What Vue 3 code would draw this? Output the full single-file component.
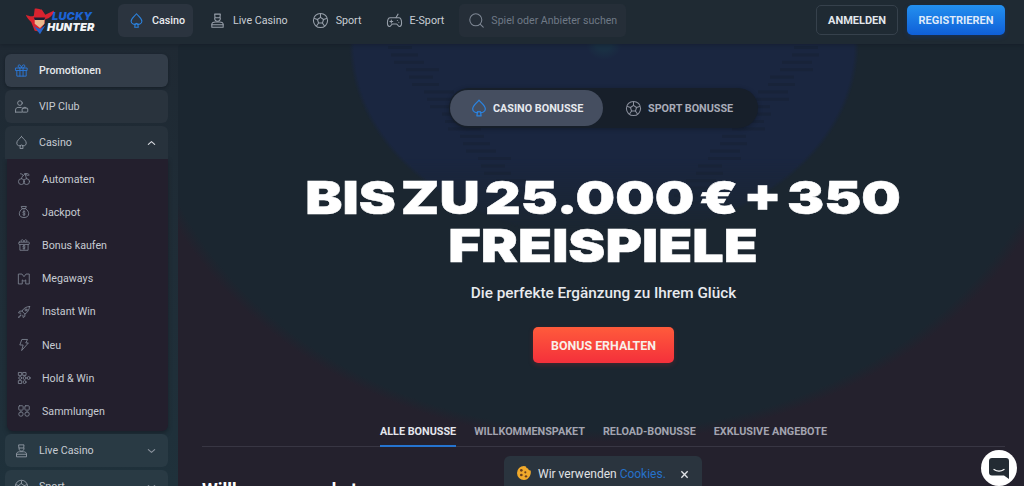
<script setup>
const topNav = [
  { label: 'Casino', icon: 'spade', active: true },
  { label: 'Live Casino', icon: 'dealer' },
  { label: 'Sport', icon: 'ball' },
  { label: 'E-Sport', icon: 'pad' },
]
const subNav = [
  { label: 'Automaten', icon: 'cherry' },
  { label: 'Jackpot', icon: 'bag' },
  { label: 'Bonus kaufen', icon: 'giftd' },
  { label: 'Megaways', icon: 'mega' },
  { label: 'Instant Win', icon: 'rocket' },
  { label: 'Neu', icon: 'bolt' },
  { label: 'Hold & Win', icon: 'hold' },
  { label: 'Sammlungen', icon: 'grid' },
]
const tabs = ['ALLE BONUSSE', 'WILLKOMMENSPAKET', 'RELOAD-BONUSSE', 'EXKLUSIVE ANGEBOTE']
const rows = []
for (let i = 0; i < 22; i++) {
  const y = 2 + i * 7.4
  const half = 216 - i * 6
  rows.push({ y, lx: 426 - half - (i % 3) * 3, rx: 426 + half - 26 + (i % 2) * 4, w: 24 + (i % 4) * 3 })
}
</script>

<template>
  <div class="page">
    <svg class="sprite" aria-hidden="true">
      <symbol id="i-spade" viewBox="0 0 24 24"><path d="M12 2.500c3 3.800 7.600 6.400 7.600 10.600a4.400 4.400 0 0 1-7.600 2.900 4.400 4.400 0 0 1-7.600-2.900C4.400 8.900 9 6.300 12 2.500z"/><path d="M10.200 16.500 9.500 21.500h5l-.7-5"/></symbol>
      <symbol id="i-dealer" viewBox="0 0 24 24"><path d="M8 3h8l-.5 5h-7z"/><path d="M8 8.500c0 3 1.500 4.500 4 4.500s4-1.500 4-4.500"/><path d="M4 21.500v-4c0-2 2-3.500 5-3.500h6c3 0 5 1.500 5 3.500v4z"/><path d="M4 18h16"/></symbol>
      <symbol id="i-ball" viewBox="0 0 24 24"><circle cx="12" cy="12" r="10"/><path d="M12 7.500l4.300 3.100-1.600 5h-5.400l-1.600-5z"/><path d="M12 7.500V3M16.300 10.600l4.200-1.500M14.700 15.600l2.700 3.800M9.300 15.600l-2.700 3.800M7.700 10.600 3.500 9.100"/></symbol>
      <symbol id="i-pad" viewBox="0 0 24 24"><path d="M6 8h12c2.500 0 4 3 4 7.500 0 3-1 5-2.800 5-2.200 0-2.700-3.500-4.700-3.500h-5c-2 0-2.500 3.500-4.700 3.500C3 20.500 2 18.500 2 15.500 2 11 3.500 8 6 8z"/><path d="M7.500 11.500v4M5.500 13.500h4M16 12h.1M18 14.500h.1M14 8l3-5"/></symbol>
      <symbol id="i-search" viewBox="0 0 24 24"><circle cx="11" cy="11" r="8.500"/><path d="m17.500 17.500 4 4"/></symbol>
      <symbol id="i-gift" viewBox="0 0 24 24"><rect x="3" y="8" width="18" height="4"/><path d="M4.500 12v9h15v-9M9.500 8v13M14.500 8v13M9.500 8C6 8 5.500 3 8.500 3c2 0 3.500 3 3.500 5 0-2 1.500-5 3.500-5 3 0 2.500 5-1 5"/></symbol>
      <symbol id="i-vip" viewBox="0 0 24 24"><circle cx="9.500" cy="6.500" r="3.700"/><path d="M2.500 21v-3.500c0-2.500 2-4 4-4h5"/><rect x="13" y="14.500" width="9" height="6.500" rx="1.500"/><path d="M2.500 21H13M15.500 14.500c0-2 4-2 4 0"/></symbol>
      <symbol id="i-cherry" viewBox="0 0 24 24"><circle cx="7.500" cy="16.500" r="5"/><circle cx="16.500" cy="16.500" r="5"/><path d="M7.500 11.500C8 8 11 5 14 3c.5 3 1.500 6 2.500 8.500M14 3c2-1 5-.5 7 2-2 1.500-5 1-7-2zM6 3c2 0 4 1 5 3"/></symbol>
      <symbol id="i-bag" viewBox="0 0 24 24"><path d="M8 2.500h8l-1.500 4h-5z"/><path d="M9 6.500C5.500 9 4 12 4 15c0 4 3 6.500 8 6.500s8-2.500 8-6.500c0-3-1.500-6-5-8.500z"/><path d="M14 11.500c-1-1-4-1-4 1 0 2 4 1 4 3 0 2-3 2-4 1M12 9.500v9"/></symbol>
      <symbol id="i-giftd" viewBox="0 0 24 24"><rect x="3" y="7" width="18" height="4" rx="1"/><path d="M5 11v10h14V11M8 7C6 5.500 7 3 9 3c1.500 0 3 2 3 4 0-2 1.500-4 3-4 2 0 3 2.500 1 4"/><path d="M14 13.500c-1-.8-4-.8-4 .8 0 1.800 4 .8 4 2.700 0 1.600-3 1.600-4 .8M12 12.500v7"/></symbol>
      <symbol id="i-mega" viewBox="0 0 24 24"><path d="M3 3.500h5.500L12 8l3.500-4.500H21v17h-6v-7L12 16l-3-2.500v7H3z"/></symbol>
      <symbol id="i-rocket" viewBox="0 0 24 24"><path d="M21.500 2.500c-6 .5-10 3-13 8l5 5c5-3 7.500-7 8-13z"/><circle cx="15.500" cy="8.500" r="1.800"/><path d="M8.500 10.500H4.500l-2 3 4 .5M13.500 15.500v4l-3 2-.5-4M6.500 17.500c-2 .5-3.500 2-4 4 2-.5 3.500-2 4-4z"/></symbol>
      <symbol id="i-bolt" viewBox="0 0 24 24"><path d="M9 2.500h9l-3 6h4.500L8 21.500l2.500-9.500H5.500z"/></symbol>
      <symbol id="i-hold" viewBox="0 0 24 24"><rect x="3" y="2.500" width="5" height="5"/><rect x="10.500" y="2.500" width="5" height="5"/><circle cx="5.500" cy="12" r="2.500"/><circle cx="13" cy="12" r="2.500"/><circle cx="20" cy="12" r="2.500"/><rect x="3" y="16.500" width="5" height="5"/><circle cx="13" cy="19" r="2.500"/></symbol>
      <symbol id="i-grid" viewBox="0 0 24 24"><rect x="3" y="3" width="7.500" height="7.500" rx="1.500"/><rect x="13.500" y="3" width="7.500" height="7.500" rx="1.500"/><rect x="3" y="13.500" width="7.500" height="7.500" rx="3.700"/><rect x="13.500" y="13.500" width="7.500" height="7.500" rx="3.700"/></symbol>
    </svg>

    <header class="top">
      <div class="logo">
        <svg class="logo-mark" viewBox="0 0 34 32">
          <path d="M1 9c4 2 7 2 9 1l1-8c3-1 6 1 8 1l4 6 10-5c-1 5-5 9-10 10l-1 5-6 9-5-1-4-10C4 15 2 12 1 9z" fill="#d8232f"/>
          <path d="M11 13h11v6l-5 5-6-5z" fill="#e8b98d"/>
          <path d="M10 12h13l-1 3H11z" fill="#1c1f33"/>
          <path d="M10 22l7 3 6-4-6 10z" fill="#2563c9"/>
        </svg>
        <div class="logo-text"><span class="lucky">LUCKY</span><span class="hunter">HUNTER</span></div>
      </div>
      <nav class="nav">
        <a v-for="n in topNav" :key="n.label" class="nav-item" :class="{ on: n.active }">
          <svg class="ico nav-ico"><use :href="'#i-' + n.icon" /></svg>
          <span>{{ n.label }}</span>
        </a>
      </nav>
      <div class="search">
        <svg class="ico search-ico"><use href="#i-search" /></svg>
        <span>Spiel oder Anbieter suchen</span>
      </div>
      <div class="actions">
        <button class="btn login">ANMELDEN</button>
        <button class="btn reg">REGISTRIEREN</button>
      </div>
    </header>

    <div class="body">
      <aside class="side">
        <a class="s-item active"><svg class="ico s-ico blue"><use href="#i-gift" /></svg>Promotionen</a>
        <a class="s-item"><svg class="ico s-ico"><use href="#i-vip" /></svg>VIP Club</a>
        <div class="group">
          <a class="s-item open"><svg class="ico s-ico"><use href="#i-spade" /></svg>Casino
            <svg class="chev up" viewBox="0 0 10 6"><path d="M1.500 4.500 5 1.500l3.500 3" /></svg>
          </a>
          <div class="sub">
            <a v-for="s in subNav" :key="s.label" class="sub-item">
              <svg class="ico sub-ico"><use :href="'#i-' + s.icon" /></svg>{{ s.label }}
            </a>
          </div>
        </div>
        <a class="s-item teal"><svg class="ico s-ico"><use href="#i-dealer" /></svg>Live Casino
          <svg class="chev" viewBox="0 0 10 6"><path d="M1.500 1.500 5 4.500l3.500-3" /></svg>
        </a>
        <a class="s-item teal"><svg class="ico s-ico"><use href="#i-ball" /></svg>Sport
          <svg class="chev" viewBox="0 0 10 6"><path d="M1.500 1.500 5 4.500l3.500-3" /></svg>
        </a>
      </aside>

      <main class="main">
        <div class="glow">
          <svg class="stripes" width="846" height="200">
            <g fill="#16202f">
              <template v-for="r in rows" :key="r.y">
                <rect :x="r.lx" :y="r.y" :width="r.w" height="3" />
                <rect :x="r.rx" :y="r.y" :width="r.w" height="3" />
              </template>
            </g>
          </svg>
        </div>
        <section class="hero">
          <div class="switch">
            <a class="sw on"><svg class="ico sw-ico bluei"><use href="#i-spade" /></svg>CASINO BONUSSE</a>
            <a class="sw"><svg class="ico sw-ico"><use href="#i-ball" /></svg>SPORT BONUSSE</a>
          </div>
          <h1 class="title"><span>BIS ZU 25.000 € + 350</span><span>FREISPIELE</span></h1>
          <p class="lead">Die perfekte Ergänzung zu Ihrem Glück</p>
          <button class="cta">BONUS ERHALTEN</button>
        </section>
        <div class="tabs">
          <a v-for="(t, i) in tabs" :key="t" class="tab" :class="{ on: i === 0 }">{{ t }}</a>
        </div>
        <h2 class="welcome">Willkommenspaket</h2>
      </main>
    </div>

    <div class="toast">
      <svg class="cookie" viewBox="0 0 24 24">
        <path d="M12 1.500c1 0 2 .3 3 .8.200 2 1.500 3 3 3 .5 2 2 3 4 2.800 1.500 6-3 14.400-10 14.400A10.500 10.500 0 0 1 12 1.500z" fill="#f0a92b"/>
        <circle cx="8" cy="8" r="2" fill="#6b3f1d"/><circle cx="14" cy="11" r="1.600" fill="#6b3f1d"/>
        <circle cx="8" cy="15" r="2" fill="#6b3f1d"/><circle cx="15" cy="17" r="1.800" fill="#6b3f1d"/>
      </svg>
      <span class="t-text">Wir verwenden <a>Cookies.</a></span>
      <svg class="close" viewBox="0 0 10 10"><path d="M1.500 1.500l7 7M8.500 1.500l-7 7" /></svg>
    </div>
    <div class="chat">
      <svg viewBox="0 0 24 24" width="24" height="24">
        <path d="M5 2h14a3 3 0 0 1 3 3v18l-5-3.500H5a3 3 0 0 1-3-3V5a3 3 0 0 1 3-3z" fill="#232b33"/>
        <path d="M7 13.500c3 2 7 2 10 0" stroke="#fff" stroke-width="1.300" fill="none" stroke-linecap="round"/>
      </svg>
    </div>
  </div>
</template>

<style>
html, body { margin: 0; background: #24212d; overflow: hidden; }
</style>

<style scoped>
* { box-sizing: border-box; }
.page {
  width: 1024px; height: 486px; overflow: hidden; position: relative;
  font-family: Roboto, "Liberation Sans", sans-serif; color: #d5d8de;
  background: #1f2a33;
}
.sprite { display: none; }
.ico { fill: none; stroke: currentColor; stroke-width: 1.500; stroke-linecap: round; stroke-linejoin: round; flex: none; }

.top { height: 44px; display: flex; align-items: flex-start; padding-top: 4px; background: #1f2a33; position: relative; z-index: 2; box-shadow: 0 1px 4px rgba(15, 22, 30, .45); }
.logo { width: 118px; height: 33px; padding-left: 25px; display: flex; align-items: center; flex: none; }
.logo-mark { width: 30px; height: 30px; flex: none; margin-right: -8px; }
.logo-text { position: relative; display: flex; flex-direction: column; font-family: Inter, sans-serif; font-weight: 900; font-style: italic; font-size: 11px; line-height: 11px; letter-spacing: .2px; margin-top: 3px; }
.lucky { color: #1c62d4; padding-left: 5px; display: block; }
.hunter { color: #f2f4f7; display: block; }

.nav { display: flex; flex: none; }
.nav-item { display: flex; align-items: center; height: 33px; font-size: 10.700px; font-weight: 400; color: #c9ced5; padding: 0 8px 0 16px; gap: 7px; border-radius: 6px; white-space: nowrap; }
.nav-item.on { width: 75px; background: #2b343f; color: #e9ebef; font-weight: 500; padding: 0 0 0 10px; }
.nav-item.on .ico { color: #2b83e0; }
.nav-ico { width: 17px; height: 17px; color: #98a0ab; }

.search { width: 167px; height: 33px; margin-left: 7px; background: #252e38; border-radius: 5px; display: flex; align-items: center; padding-left: 9px; gap: 6px; font-size: 10.600px; color: #6f7986; white-space: nowrap; flex: none; }
.search-ico { width: 17px; height: 17px; color: #7d8693; }

.actions { margin-left: auto; padding-right: 19px; display: flex; gap: 9px; padding-top: 1px; }
.btn { height: 30px; border-radius: 5px; font-family: Roboto, sans-serif; font-weight: 700; font-size: 11px; color: #e3e7ec; padding: 0; }
.login { width: 82px; background: transparent; border: 1px solid #36414c; }
.reg { width: 98px; border: 0; background: linear-gradient(#2390ef, #0f5fd8); color: #dfeafa; box-shadow: 0 2px 4px rgba(10, 60, 150, .35); }

.body { display: flex; height: 442px; background: linear-gradient(#1f2933, #1f313b); }
.side { width: 178px; flex: none; padding: 10px 10px 0 5px; display: flex; flex-direction: column; gap: 3px; }
.s-item { height: 33px; flex: none; display: flex; align-items: center; padding-left: 9px; gap: 10px; font-size: 10.700px; color: #c6cbd2; background: #29333d; border-radius: 6px; position: relative; }
.s-item.active { background: #333d49; color: #e6e9ed; font-weight: 500; box-shadow: 0 1px 3px rgba(10, 15, 22, .4); }
.s-item.teal { background: #293a44; }
.s-item.open { background: #27323c; border-radius: 6px 6px 0 0; }
.s-ico { width: 15px; height: 15px; color: #8e96a1; }
.s-ico.blue { color: #2b78d8; }
.chev { width: 9px; height: 6px; margin-left: auto; margin-right: 12px; fill: none; stroke: #8a929d; stroke-width: 1.300; stroke-linecap: round; stroke-linejoin: round; }
.chev.up { stroke: #d5d8de; }
.group { display: flex; flex-direction: column; }
.sub { background: #231f2d; border-radius: 0 0 6px 6px; margin-left: 2px; height: 272px; padding-top: 3.500px; display: flex; flex-direction: column; box-shadow: 0 2px 4px rgba(15, 18, 25, .5); }
.sub-item { height: 33.200px; flex: none; display: flex; align-items: center; padding-left: 10px; gap: 11px; font-size: 10.700px; color: #c6cbd2; }
.sub-ico { width: 14px; height: 14px; color: #7d8491; }

.main { flex: 1; min-width: 0; position: relative; overflow: hidden; padding: 0 19px 0 24px;
  background: radial-gradient(475px 382px at 426px 16px, #1b2630 97%, #24212d 100%);
  border-top-left-radius: 4px;
  display: flex; flex-direction: column; }
.glow { position: absolute; left: 0; top: 0; width: 846px; height: 190px;
  background:
    radial-gradient(18px 16px at 426px 0, #1a3044 40%, transparent 100%),
    radial-gradient(255px 195px at 426px 0, #1a2640 98%, transparent 100%);
  -webkit-mask-image: linear-gradient(#000 60%, transparent);
  mask-image: linear-gradient(#000 60%, transparent); }
.stripes { position: absolute; left: 0; top: 0; opacity: .4; }

.hero { position: relative; display: flex; flex-direction: column; align-items: center; padding-top: 44px; height: 366px; flex: none; }
.switch { width: 309px; height: 40px; flex: none; background: #171f2a; border-radius: 20px; display: flex; align-items: center; padding-left: 1px; font-size: 10.800px; font-weight: 700; color: #a9acb8; box-shadow: 0 1px 4px rgba(10, 14, 20, .4); }
.sw { display: flex; align-items: center; height: 36px; border-radius: 18px; gap: 6px; padding-left: 22px; white-space: nowrap; }
.sw.on { width: 153px; background: #454e60; color: #e6e9ee; padding-left: 19px; gap: 4px; }
.sw-ico { width: 17px; height: 17px; color: #8a8f9c; }
.sw-ico.bluei { width: 20px; height: 20px; color: #2b83e0; }

.title { margin: 45px 0 0; display: flex; flex-direction: column; align-items: center; font-family: Inter, sans-serif; font-weight: 900; font-size: 46px; line-height: 48px; color: #fff; white-space: nowrap; transform: scaleX(1.21); word-spacing: -5px; -webkit-text-stroke: .5px #fff; }
.lead { margin: 14px 0 0; font-size: 15.300px; font-weight: 500; color: #e8eaee; line-height: 20px; }
.cta { margin-top: 24px; width: 141px; height: 36px; flex: none; border: 0; border-radius: 5px; background: linear-gradient(#ff5b3b, #f4303b); color: #f8efe9; font-family: Roboto, sans-serif; font-weight: 700; font-size: 12.400px; box-shadow: 0 2px 5px rgba(200, 40, 40, .25); padding: 0; }

.tabs { position: relative; height: 37px; flex: none; display: flex; justify-content: center; gap: 18px; border-bottom: 1px solid #383643; }
.tab { font-size: 10.800px; font-weight: 700; color: #a3a4b0; padding-top: 15px; height: 37px; white-space: nowrap; }
.tab.on { color: #e4e6ec; border-bottom: 2px solid #2574cf; }

.welcome { position: relative; margin: 31px 0 0; font-size: 18px; line-height: 24px; font-weight: 700; color: #fff; }

.toast { position: absolute; left: 504px; top: 456px; width: 198px; height: 36px; background: #2a343e; border-radius: 6px; display: flex; align-items: flex-start; padding: 9px 0 0 12px; z-index: 3; }
.cookie { width: 16px; height: 16px; flex: none; }
.t-text { margin-left: 6px; font-size: 12px; line-height: 18px; color: #e0e2e6; white-space: nowrap; }
.t-text a { color: #2671c9; }
.close { position: absolute; right: 13px; top: 14px; width: 9px; height: 9px; fill: none; stroke: #dfe2e6; stroke-width: 1.500; }
.chat { position: absolute; left: 981px; top: 450px; width: 36px; height: 36px; border-radius: 50%; background: #fff; display: flex; align-items: center; justify-content: center; z-index: 3; }
</style>
